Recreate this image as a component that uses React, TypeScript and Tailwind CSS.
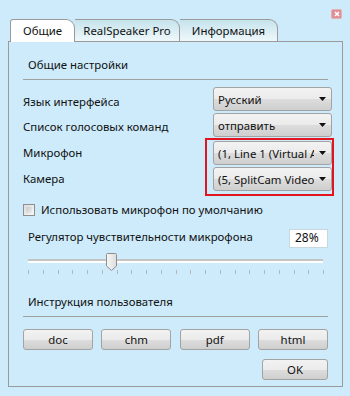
import React from "react";

const btnBg =
  "bg-[linear-gradient(#f2f2f2_0%,#ebebeb_50%,#dddddd_50%,#cfcfcf_100%)] border border-[#a3a3a3] rounded-[3px]";

function Dropdown({ text }: { text: string }) {
  return (
    <div className={`w-[119px] h-[24px] ${btnBg} flex items-center pl-[4px] pr-[5px] overflow-hidden`}>
      <span className="flex-1 whitespace-nowrap overflow-hidden text-[11.4px] leading-[17px] text-[#111]">{text}</span>
      <svg width="7" height="4" viewBox="0 0 7 4" className="ml-[5px] shrink-0">
        <path d="M0 0H7L3.5 4Z" fill="#111" />
      </svg>
    </div>
  );
}

function Btn({ text, w = "w-[70px]" }: { text: string; w?: string }) {
  return (
    <div className={`${w} h-[21px] ${btnBg} flex items-center justify-center text-[11.4px] text-[#111]`}>{text}</div>
  );
}

export default function App() {
  const ticks = Array.from({ length: 21 }, (_, i) => i);
  return (
    <div
      className="w-[350px] h-[396px] bg-[#cdebfb] relative overflow-hidden text-[#111] text-[11.4px]"
      style={{ fontFamily: '"Noto Sans", "Open Sans", sans-serif' }}
    >
      {/* close button */}
      <div className="absolute left-[331px] top-[9px] w-[11px] h-[10px] rounded-[2px] bg-[#dc8f94] border border-[#e8aeb2] flex items-center justify-center">
        <svg width="6" height="6" viewBox="0 0 6 6">
          <path d="M1 1L5 5M5 1L1 5" stroke="#fff" strokeWidth="1.6" />
        </svg>
      </div>

      {/* tabs */}
      <div className="flex pt-[19px] pl-[10px] h-[41px]">
        <div className="w-[65px] h-[23px] bg-white border border-[#9a9a9a] border-b-0 rounded-tl-[3px] rounded-tr-[9px] flex items-center justify-center relative z-10">
          Общие
        </div>
        <div className="w-[105px] h-[22px] bg-[linear-gradient(#c6e3ec,#eef8fb)] border border-l-0 border-[#9a9a9a] border-b-0 rounded-tr-[9px] flex items-center justify-center">
          RealSpeaker Pro
        </div>
        <div className="w-[98px] h-[22px] bg-[linear-gradient(#c6e3ec,#eef8fb)] border border-l-0 border-[#9a9a9a] border-b-0 rounded-tr-[9px] flex items-center justify-center">
          Информация
        </div>
      </div>

      {/* panel */}
      <div className="ml-[8px] w-[335px] h-[346px] border border-[#9a9a9a] flex flex-col pl-[14px] pr-[10px]">
        <div className="mt-[15px] h-[16px] pl-[5px] leading-[16px]">Общие настройки</div>
        <div className="mt-[6px] mr-[4px] h-px bg-[#a0a0a0]" />

        <div className="mt-[7px] flex items-center justify-between h-[24px]">
          <span className="pt-[5px]">Язык интерфейса</span>
          <Dropdown text="Русский" />
        </div>
        <div className="mt-[2px] flex items-center justify-between h-[24px]">
          <span className="pt-[4px]">Список голосовых команд</span>
          <Dropdown text="отправить" />
        </div>

        <div className="relative mt-[4px] flex flex-col gap-[2px]">
          <div className="flex items-center justify-between h-[24px]">
            <span>Микрофон</span>
            <Dropdown text="(1, Line 1 (Virtual Audio Cable))" />
          </div>
          <div className="flex items-center justify-between h-[24px]">
            <span>Камера</span>
            <Dropdown text="(5, SplitCam Video Driver)" />
          </div>
          <div className="absolute left-[182px] top-[-3px] w-[129px] h-[58px] border-2 border-[#e3141e] pointer-events-none" />
        </div>

        <div className="mt-[11px] flex items-center h-[16px]">
          <div className="w-[12px] h-[12px] border border-[#8f8f8f] bg-[linear-gradient(135deg,#dcdcdc,#f7f7f7)] p-[2px]">
            <div className="w-full h-full bg-[linear-gradient(135deg,#c9c9c9,#eeeeee)]" />
          </div>
          <span className="ml-[6px]">Использовать микрофон по умолчанию</span>
        </div>

        <div className="mt-[10px] flex items-center justify-between h-[20px] pr-[4px]">
          <span className="pl-[5px] -mt-[2px]">Регулятор чувствительности микрофона</span>
          <div className="w-[39px] h-[19px] bg-white border border-[#c8d6de] flex items-center pl-[5px] text-[12px]">28%</div>
        </div>

        {/* slider */}
        <div className="relative mt-[5px] ml-[5px] w-[295px] h-[24px]">
          <div className="absolute left-0 right-0 top-[6px] h-[2px] bg-[#c4c4c4]" />
          <div className="absolute left-0 right-0 top-[8px] h-[2px] bg-[#ffffff]" />
          <svg className="absolute left-[78px] top-0" width="11" height="18" viewBox="0 0 11 18">
            <defs>
              <linearGradient id="th" x1="0" y1="0" x2="1" y2="0">
                <stop offset="0" stopColor="#f7f7f7" />
                <stop offset="1" stopColor="#dcdcdc" />
              </linearGradient>
            </defs>
            <path d="M0.5 1.5Q0.5 0.5 1.5 0.5H9.5Q10.5 0.5 10.5 1.5V13L5.5 17.5L0.5 13Z" fill="url(#th)" stroke="#8e8e8e" />
          </svg>
          <div className="absolute left-0 right-0 top-[17px] h-[4px]">
            {ticks.map((i) => (
              <div
                key={i}
                className="absolute top-0 w-px h-[4px] bg-[#b8b8b8]"
                style={{ left: `${Math.round(i * 14.75)}px` }}
              />
            ))}
          </div>
        </div>

        <div className="mt-[17px] h-[16px] pl-[5px] leading-[16px]">Инструкция пользователя</div>
        <div className="mt-[6px] mr-[4px] h-px bg-[#a0a0a0]" />

        <div className="mt-[12px] flex justify-between pr-[4px]">
          <Btn text="doc" />
          <Btn text="chm" />
          <Btn text="pdf" />
          <Btn text="html" />
        </div>
        <div className="mt-[9px] flex justify-end pr-[4px]">
          <Btn text="OK" w="w-[66px]" />
        </div>
      </div>
    </div>
  );
}
